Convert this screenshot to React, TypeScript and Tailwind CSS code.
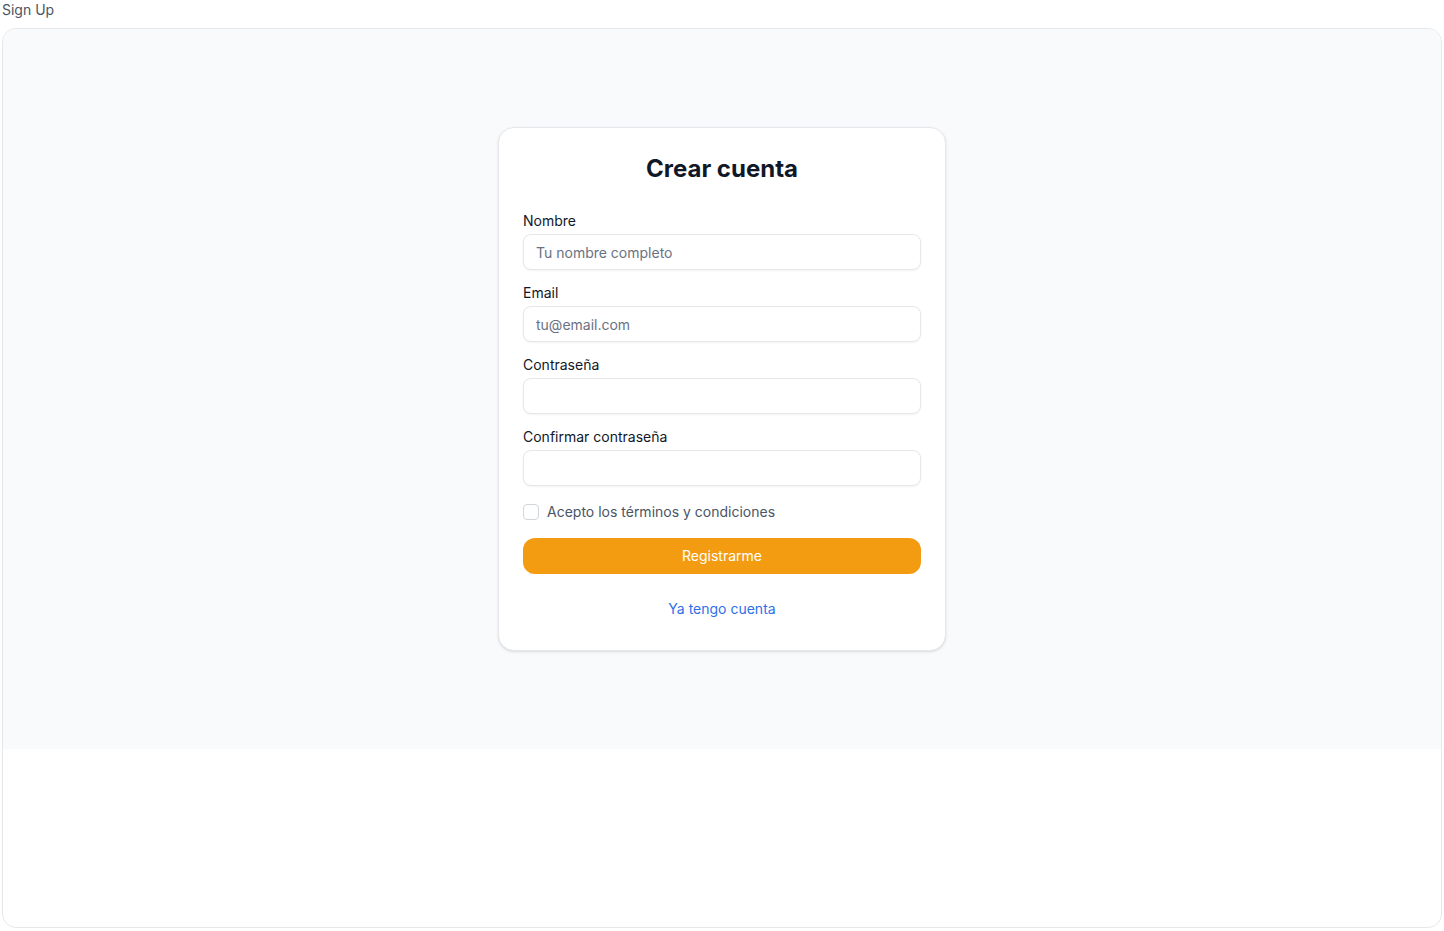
import { useState } from 'react';

type Field = {
  id: string;
  label: string;
  type: string;
  placeholder?: string;
};

const fields: Field[] = [
  { id: 'name', label: 'Nombre', type: 'text', placeholder: 'Tu nombre completo' },
  { id: 'email', label: 'Email', type: 'email', placeholder: 'tu@email.com' },
  { id: 'password', label: 'Contraseña', type: 'password' },
  { id: 'confirm', label: 'Confirmar contraseña', type: 'password' },
];

export default function App() {
  const [accepted, setAccepted] = useState(false);

  return (
    <div className="px-[2px] font-['Inter','Noto_Sans',sans-serif]">
      <div className="text-sm leading-5 text-gray-600">Sign Up</div>

      {/* Preview frame */}
      <div className="mt-2 h-[900px] overflow-hidden rounded-[14px] border border-gray-200 bg-white">
        <div className="flex min-h-[720px] items-center justify-center bg-gray-50">
          <div className="w-[448px] rounded-2xl border border-gray-200 bg-white px-6 pt-[25px] pb-[31px] shadow-sm">
            <h1 className="mb-[26px] text-center text-2xl leading-8 font-bold text-gray-900">Crear cuenta</h1>

            <form className="flex flex-col gap-[13px]" onSubmit={(e) => e.preventDefault()}>
              {fields.map((field) => (
                <div key={field.id}>
                  <label htmlFor={field.id} className="mb-[3px] block text-sm leading-5 text-gray-900">
                    {field.label}
                  </label>
                  <input
                    id={field.id}
                    type={field.type}
                    placeholder={field.placeholder}
                    className="block h-9 w-full rounded-lg border border-gray-200 bg-white px-3 text-sm text-gray-900 shadow-xs outline-none placeholder:text-gray-500"
                  />
                </div>
              ))}
            </form>

            <label className="mt-4 flex h-5 cursor-pointer items-center gap-2 text-sm text-gray-600">
              <input
                type="checkbox"
                checked={accepted}
                onChange={(e) => setAccepted(e.target.checked)}
                className="h-4 w-4 appearance-none rounded border border-gray-300 bg-white checked:bg-[#f39c12]"
              />
              Acepto los términos y condiciones
            </label>

            <button
              type="button"
              className="mt-4 h-9 w-full rounded-xl bg-[#f39c12] text-sm text-white"
            >
              Registrarme
            </button>

            <div className="mt-[25px] text-center text-sm leading-5">
              <a href="#" className="text-[#2f6fe8]">Ya tengo cuenta</a>
            </div>
          </div>
        </div>
      </div>
    </div>
  );
}
